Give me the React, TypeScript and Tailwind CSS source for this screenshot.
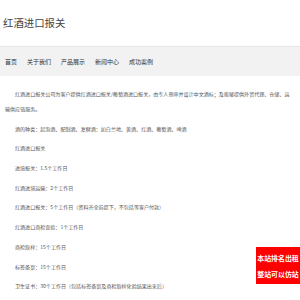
import React from 'react';

const navItems = ['首页', '关于我们', '产品展示', '新闻中心', '成功案例'];

const lines = [
  '红酒进口报关公司为客户提供红酒进口报关/葡萄酒进口报关，由专人预审并设计中文酒标；及能够提供外贸代理、仓储、运输供应链服务。',
  '酒的种类：起泡酒、配制酒、发酵酒：如白兰地、黄酒、红酒、葡萄酒、啤酒',
  '红酒进口报关',
  '进境报关：1.5个工作日',
  '红酒进境运输：2个工作日',
  '红酒进口报关：5个工作日（资料齐全前提下，不包括等客户付款）',
  '红酒进口商检查验：1个工作日',
  '商检取样：15个工作日',
  '标签备案：15个工作日',
  '卫生证书：30个工作日（包括标签备案及商检取样化验结果出来后）',
];

const App: React.FC = () => {
  return (
    <div className="min-h-[300px] bg-white font-['Noto_Sans_CJK_SC',sans-serif] text-[#333]">
      {/* Header */}
      <div className="h-[47px] flex items-center px-[3px] border-b border-[#e6e6e6]">
        <h1 className="text-[10.4px] font-normal text-[#444] leading-none">红酒进口报关</h1>
      </div>

      {/* Nav */}
      <div className="h-[29px] bg-[#f2f2f2] flex items-center">
        {navItems.map((item) => (
          <a key={item} className="px-[5px] text-[6px] leading-none text-[#333]">
            {item}
          </a>
        ))}
      </div>

      {/* Content */}
      <div className="pl-[5px] pr-[8px] pt-[10px] text-[5.05px] leading-[15px] text-[#555] space-y-[4.7px]">
        {lines.map((line, i) => (
          <p key={i} className="indent-[10px]">
            {line}
          </p>
        ))}
      </div>

      {/* Floating badge */}
      <div className="fixed right-0 top-[247px] w-[44px] h-[37px] bg-[#ff0000] flex flex-col items-center justify-center text-white font-bold text-[6.9px] leading-[16px]">
        <span>本站排名出租</span>
        <span>整站可以仿站</span>
      </div>
    </div>
  );
};

export default App;
